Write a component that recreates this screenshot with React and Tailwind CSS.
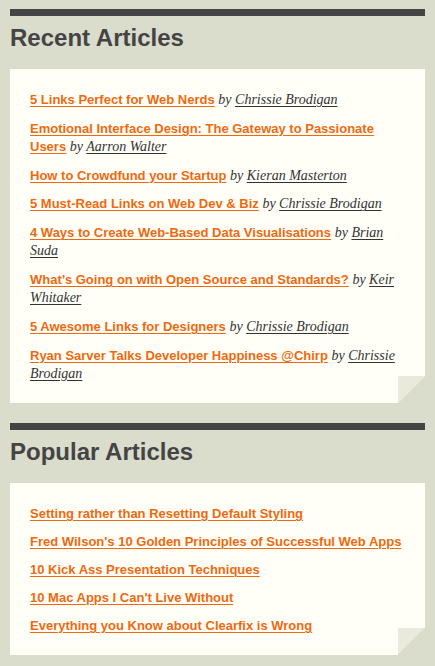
import React from "react";

const recent = [
  { t: "5 Links Perfect for Web Nerds", a: "Chrissie Brodigan" },
  { t: "Emotional Interface Design: The Gateway to Passionate Users", a: "Aarron Walter" },
  { t: "How to Crowdfund your Startup", a: "Kieran Masterton" },
  { t: "5 Must-Read Links on Web Dev & Biz", a: "Chrissie Brodigan" },
  { t: "4 Ways to Create Web-Based Data Visualisations", a: "Brian Suda" },
  { t: "What\u2019s Going on with Open Source and Standards?", a: "Keir Whitaker" },
  { t: "5 Awesome Links for Designers", a: "Chrissie Brodigan" },
  { t: "Ryan Sarver Talks Developer Happiness @Chirp", a: "Chrissie Brodigan" },
];

const popular = [
  "Setting rather than Resetting Default Styling",
  "Fred Wilson's 10 Golden Principles of Successful Web Apps",
  "10 Kick Ass Presentation Techniques",
  "10 Mac Apps I Can't Live Without",
  "Everything you Know about Clearfix is Wrong",
];

const sans = "font-['Liberation_Sans',Arial,sans-serif]";
const linkCls =
  "font-bold leading-[10px] text-[#f0690f] underline decoration-1 underline-offset-[2px]";

function Fold() {
  return (
    <div className="absolute right-0 bottom-0 w-[27px] h-[27px] bg-[linear-gradient(135deg,#e9eadb_50%,#dadccc_50%)]" />
  );
}

function Heading({ children }) {
  return (
    <>
      <div className="h-[7px] bg-[#444444]" />
      <h2 className={`${sans} mt-[8px] text-[24px] leading-[28px] font-bold text-[#444444]`}>
        {children}
      </h2>
    </>
  );
}

export default function App() {
  return (
    <div className="min-h-[666px] w-[435px] bg-[#dadccc] px-[10px] pt-[9px] pb-[11px]">
      <Heading>Recent Articles</Heading>
      <div className="relative mt-[17px] bg-[#fffff8] px-[20px] pt-[22px] pb-[20px]">
        <ul className="flex flex-col gap-[10.8px]">
          {recent.map((r, i) => (
            <li key={i} className={`${sans} text-[13px] leading-[18px] text-[#333333]`}>
              <a href="#" className={linkCls}>
                {r.t}
              </a>{" "}
              <span className="font-['Liberation_Serif',Georgia,serif] italic text-[14px] leading-[10px]">
                by{" "}
                <a href="#" className="underline decoration-1 underline-offset-[2px] text-[#333333]">
                  {r.a}
                </a>
              </span>
            </li>
          ))}
        </ul>
        <Fold />
      </div>

      <div className="mt-[20px]">
        <Heading>Popular Articles</Heading>
      </div>
      <div className="relative mt-[17px] bg-[#fffff8] px-[20px] pt-[22px] pb-[20px]">
        <ul className="flex flex-col gap-[10px]">
          {popular.map((p, i) => (
            <li key={i} className={`${sans} text-[13px] leading-[18px]`}>
              <a href="#" className={linkCls}>
                {p}
              </a>
            </li>
          ))}
        </ul>
        <Fold />
      </div>
    </div>
  );
}
